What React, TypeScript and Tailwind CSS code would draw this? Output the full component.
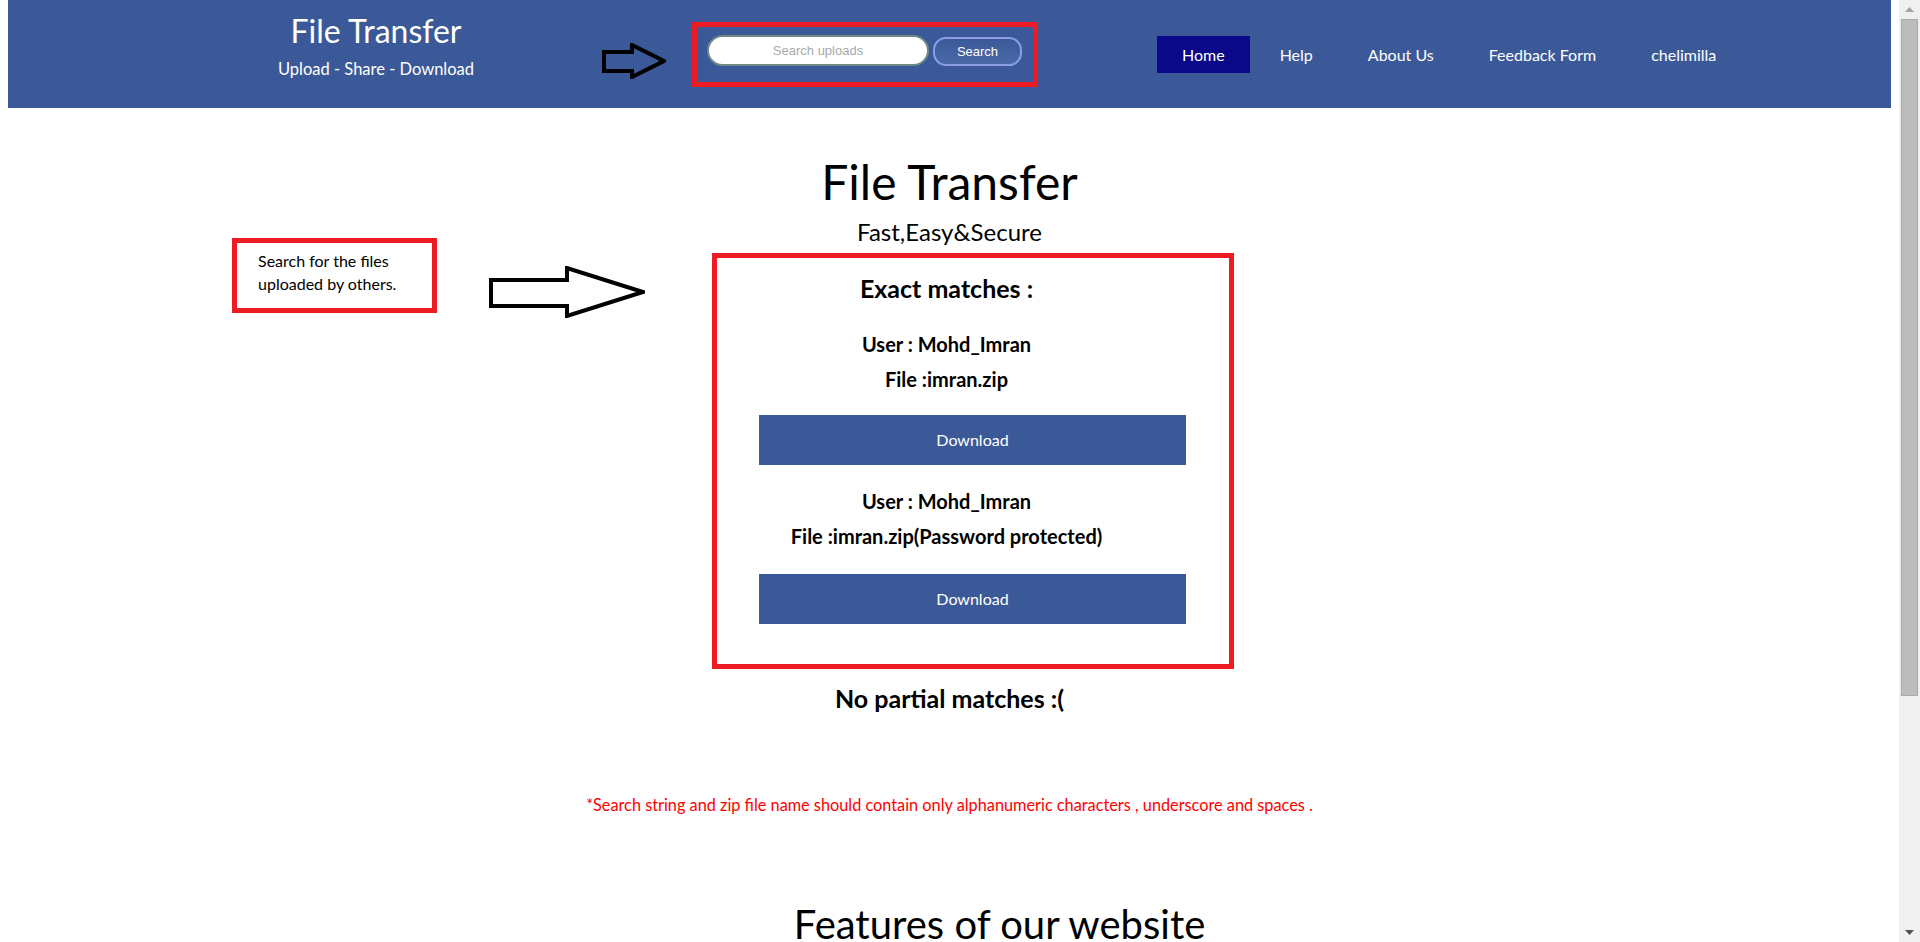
import React from 'react';

// outlined arrow used as annotation in the header and next to the results
function OutlineArrow({ w, h, points }: { w: number; h: number; points: string }) {
  return (
    <svg width={w} height={h} viewBox={`0 0 ${w} ${h}`} className="block">
      <polygon points={points} fill="none" stroke="#000" strokeWidth={4} strokeLinejoin="miter" />
    </svg>
  );
}

const navItems = ['Home', 'Help', 'About Us', 'Feedback Form', 'chelimilla'];

function MatchResult({ user, file, first }: { user: string; file: string; first?: boolean }) {
  return (
    <>
      <div className={`${first ? 'mt-[29px]' : 'mt-[24px]'} pr-[52px] text-center text-[20px] font-bold leading-[1.2]`}>
        User : {user}
      </div>
      <div className="mt-[11px] pr-[52px] text-center text-[20px] font-bold leading-[1.2]">File :{file}</div>
      <button
        className={`${first ? 'mt-[24px]' : 'mt-[26px]'} mx-auto flex h-[50px] w-[427px] items-center justify-center bg-[#3b5998] text-[16px] text-white`}
      >
        Download
      </button>
    </>
  );
}

export default function App() {
  return (
    <div className="flex h-[942px] w-[1920px] overflow-hidden bg-white font-['Lato',sans-serif] text-black">
      {/* page */}
      <div className="relative flex w-[1899px] shrink-0 flex-col">
        <header className="ml-2 flex h-[108px] w-[1883px] shrink-0 items-start bg-[#3b5998] text-white">
          <div className="ml-[218px] mt-[12px] flex w-[300px] flex-col items-center">
            <div className="text-[32px] leading-[1.2]">File Transfer</div>
            <div className="mt-[10px] text-[16.5px] leading-[1.2]">Upload - Share - Download</div>
          </div>

          <div className="ml-[76px] mt-[43px]">
            <OutlineArrow w={64} h={36} points="2,9 30,9 30,2 62,18 30,34 30,28 2,28" />
          </div>

          <div className="ml-[26px] mt-[22px] flex h-[65px] w-[346px] items-start gap-1 border-[5px] border-[#ed1c24] pl-[10px] pt-[8px]">
            <input
              readOnly
              placeholder="Search uploads"
              className="h-[31px] w-[222px] rounded-full border-2 border-[#6f8a86] bg-white text-center font-['Liberation_Sans',Arial,sans-serif] text-[13px] text-black outline-none placeholder:text-[#a9a9a9]"
            />
            <button className="mt-[2px] h-[29px] w-[89px] rounded-[13px] border-2 border-[#8c9de8] bg-linear-to-b from-[#3b5998] to-[#4a69a7] font-['Liberation_Sans',Arial,sans-serif] text-[13px] text-white">
              Search
            </button>
          </div>

          <nav className="ml-[119px] mt-[36px] flex gap-[5px]">
            {navItems.map((item, i) => (
              <a
                key={item}
                className={`flex h-[37px] items-center px-[25px] text-[16px] ${i === 0 ? 'bg-[#0b088a]' : ''}`}
              >
                {item}
              </a>
            ))}
          </nav>
        </header>

        <main className="flex flex-col items-center px-2">
          <h1 className="mt-[45px] text-[48px] font-normal leading-[1.2]">File Transfer</h1>
          <p className="mt-[7px] text-[24px] leading-[1.2]">Fast,Easy&amp;Secure</p>

          <section className="ml-[46px] mt-[7px] flex w-[522px] flex-col border-[5px] border-[#ed1c24] pb-[40px] pt-[15px]">
            <h2 className="pr-[52px] text-center text-[25px] font-bold leading-[1.2]">Exact matches :</h2>
            <MatchResult user="Mohd_Imran" file="imran.zip" first />
            <MatchResult user="Mohd_Imran" file="imran.zip(Password protected)" />
          </section>

          <h2 className="mt-[14px] text-[25px] font-bold leading-[1.2]">No partial matches :(</h2>

          <p className="mt-[82px] text-[16.3px] leading-[1.2] text-[#ff0000]">
            *Search string and zip file name should contain only alphanumeric characters , underscore and spaces .
          </p>

          <h2 className="mt-[85px] pl-[100px] text-[40px] font-normal leading-[1.2]">Features of our website</h2>
        </main>

        {/* annotation overlay: note + arrow pointing at results */}
        <div className="absolute left-[232px] top-[238px] h-[75px] w-[205px] border-[5px] border-[#ed1c24] pl-[21px] pt-[6px] text-[16px] leading-[23px]">
          Search for the files
          <br />
          uploaded by others.
        </div>
        <div className="absolute left-[489px] top-[266px]">
          <OutlineArrow w={156} h={52} points="2,14 78,14 78,2 154,26 78,50 78,40 2,40" />
        </div>
      </div>

      {/* scrollbar */}
      <div className="flex w-[21px] shrink-0 flex-col bg-[#f0f0f0]">
        <div className="flex h-[19px] items-center justify-center">
          <svg width="9" height="5" viewBox="0 0 9 5">
            <polygon points="0,5 4.5,0 9,5" fill="#a3a3a3" />
          </svg>
        </div>
        <div className="mx-[2px] h-[677px] border border-[#a8a8a8] bg-[#bcbcbc]" />
        <div className="flex-1" />
        <div className="flex h-[19px] items-center justify-center">
          <svg width="9" height="5" viewBox="0 0 9 5">
            <polygon points="0,0 9,0 4.5,5" fill="#505050" />
          </svg>
        </div>
      </div>
    </div>
  );
}
